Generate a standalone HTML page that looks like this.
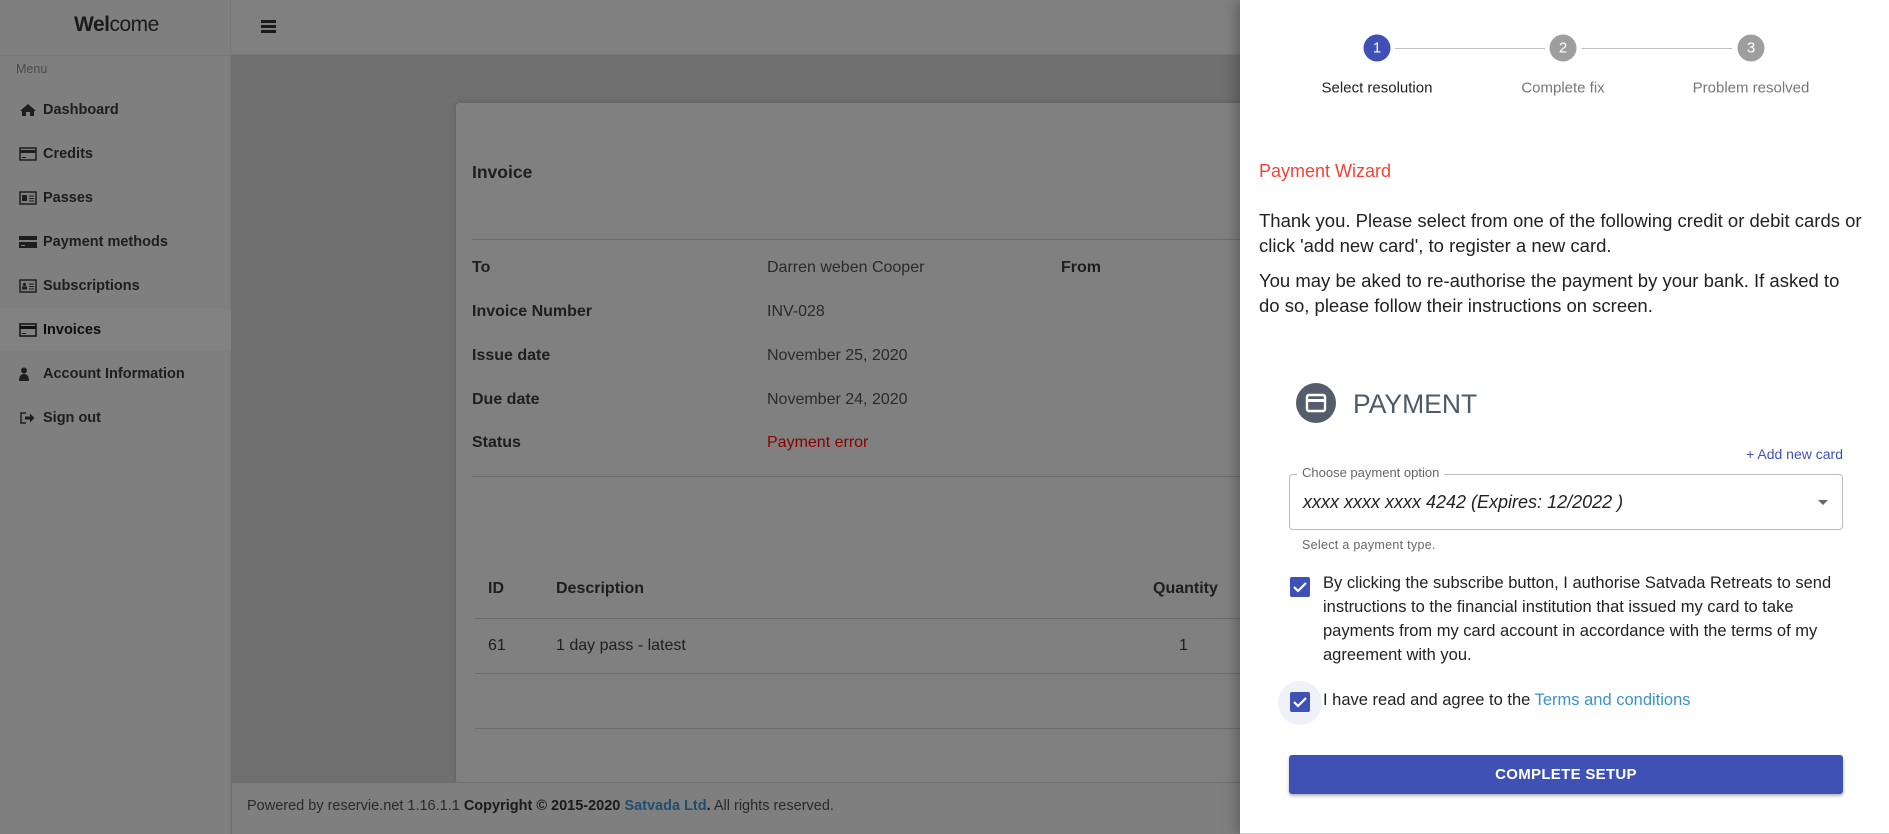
<!DOCTYPE html>
<html><head><meta charset="utf-8"><style>
*{margin:0;padding:0;box-sizing:border-box}
body{width:1889px;height:834px;overflow:hidden;position:relative;font-family:"Liberation Sans",Arial,sans-serif;background:#6f6f6f}
.a{position:absolute;white-space:nowrap}
#side{left:0;top:0;width:231px;height:834px;background:#7f7f7f;border-right:1px solid #777}
#top{left:231px;top:0;width:1009px;height:55px;background:#808080;border-bottom:1px solid #777}
.mi{left:43px;font-size:14.5px;font-weight:bold;color:#1e1e1e;transform:translateY(-50%)}
.ic{left:19px;transform:translateY(-50%)}
#card{left:456px;top:103px;width:800px;height:680px;background:#808080;border-radius:3px;box-shadow:0 0 4px rgba(0,0,0,.2)}
.lb{font-size:16px;font-weight:bold;color:#1e1e1e;transform:translateY(-50%)}
.vl{font-size:16px;color:#2a2a2a;transform:translateY(-50%)}
.hr{height:1px;background:#6c6c6c}
#foot{left:232px;top:782px;width:1008px;height:52px;background:#7f7f7f;border-top:1px solid #6c6c6c}
#drawer{left:1240px;top:0;width:649px;height:834px;background:#fff;box-shadow:-4px 0 12px rgba(0,0,0,.25);border-bottom:1px solid #ccc}
.st{width:27px;height:27px;border-radius:50%;color:#fff;font-size:15px;text-align:center;line-height:27px;transform:translate(-50%,-50%)}
.sl{font-size:15px;transform:translate(-50%,-50%)}
.p{font-size:18.5px;color:#222;line-height:25px}
.cb{width:20px;height:20px;background:#3f51b5;border-radius:2px}
.ct{font-size:16.5px;color:#222;line-height:24px}
</style></head><body>
<div class="a" id="side"></div>
<div class="a" id="top"></div>
<div class="a" style="left:0;top:55px;width:231px;height:1px;background:#777"></div>
<div class="a" style="left:74px;top:13px;font-size:21px;color:#1a1a1a;letter-spacing:-0.5px"><b>Wel</b>come</div>
<div class="a" style="left:16px;top:62px;font-size:12.5px;color:#4a4a4a">Menu</div>
<div class="a" style="left:0;top:309px;width:231px;height:42px;background:#828282"></div>
<svg class="a ic" style="top:110px" width="18" height="14" viewBox="0 0 18 14"><path d="M9 1L1 8h2v5h4V9h4v4h4V8h2z" fill="#1e1e1e"/></svg>
<svg class="a ic" style="top:154px" width="18" height="14" viewBox="0 0 18 14"><rect x="1" y="1" width="16" height="12" fill="none" stroke="#1e1e1e" stroke-width="1.5"/><rect x="1" y="3" width="16" height="3" fill="#1e1e1e"/><path d="M3 10.5h4" stroke="#1e1e1e"/></svg>
<svg class="a ic" style="top:198px" width="18" height="14" viewBox="0 0 18 14"><rect x="1" y="1" width="16" height="12" fill="none" stroke="#1e1e1e" stroke-width="1.5"/><rect x="3" y="4" width="5" height="6" fill="#1e1e1e"/><path d="M10 5h5M10 7.5h5M10 10h5" stroke="#1e1e1e"/></svg>
<svg class="a ic" style="top:242px" width="18" height="14" viewBox="0 0 18 14"><rect x="0" y="1" width="18" height="12" fill="#1e1e1e"/><rect x="0" y="5" width="18" height="2" fill="#7f7f7f"/><path d="M2 10.5h4" stroke="#7f7f7f"/></svg>
<svg class="a ic" style="top:286px" width="18" height="14" viewBox="0 0 18 14"><rect x="1" y="1" width="16" height="12" fill="none" stroke="#1e1e1e" stroke-width="1.5"/><circle cx="5.5" cy="5.5" r="1.6" fill="#1e1e1e"/><rect x="3" y="7.5" width="5" height="3" fill="#1e1e1e"/><path d="M10 5h5M10 7.5h5M10 10h5" stroke="#1e1e1e"/></svg>
<svg class="a ic" style="top:330px" width="18" height="14" viewBox="0 0 18 14"><rect x="1" y="1" width="16" height="12" fill="none" stroke="#111" stroke-width="1.5"/><rect x="1" y="3" width="16" height="3" fill="#111"/><path d="M3 10.5h4" stroke="#111"/></svg>
<svg class="a ic" style="top:374px" width="18" height="14" viewBox="0 0 18 14"><circle cx="5" cy="3.5" r="3" fill="#1e1e1e"/><path d="M0 14c0-5 2-7 5-7s5 2 5 7z" fill="#1e1e1e"/></svg>
<svg class="a ic" style="top:418px" width="18" height="14" viewBox="0 0 18 14"><path d="M7 2H2v10h5" fill="none" stroke="#1e1e1e" stroke-width="1.5"/><path d="M6 5.5h5V2.5l4.5 4.5-4.5 4.5V8.5H6z" fill="#1e1e1e"/></svg>
<div class="a mi" style="top:110px">Dashboard</div>
<div class="a mi" style="top:154px">Credits</div>
<div class="a mi" style="top:198px">Passes</div>
<div class="a mi" style="top:242px">Payment methods</div>
<div class="a mi" style="top:286px">Subscriptions</div>
<div class="a mi" style="top:330px;color:#0e0e0e">Invoices</div>
<div class="a mi" style="top:374px">Account Information</div>
<div class="a mi" style="top:418px">Sign out</div>
<div class="a" style="left:261px;top:20px;width:15px;height:3px;background:#1a1a1a;box-shadow:0 5px 0 #1a1a1a,0 10px 0 #1a1a1a"></div>

<div class="a" id="card"></div>
<div class="a" style="left:472px;top:162px;font-size:17.5px;font-weight:bold;color:#1e1e1e">Invoice</div>
<div class="a hr" style="left:472px;top:239px;width:780px"></div>
<div class="a lb" style="left:472px;top:268px">To</div>
<div class="a vl" style="left:767px;top:268px">Darren weben Cooper</div>
<div class="a lb" style="left:1061px;top:268px">From</div>
<div class="a lb" style="left:472px;top:312px">Invoice Number</div>
<div class="a vl" style="left:767px;top:312px">INV-028</div>
<div class="a lb" style="left:472px;top:356px">Issue date</div>
<div class="a vl" style="left:767px;top:356px">November 25, 2020</div>
<div class="a lb" style="left:472px;top:400px">Due date</div>
<div class="a vl" style="left:767px;top:400px">November 24, 2020</div>
<div class="a lb" style="left:472px;top:443px">Status</div>
<div class="a vl" style="left:767px;top:443px;color:#8a0000">Payment error</div>
<div class="a hr" style="left:472px;top:476px;width:780px"></div>
<div class="a lb" style="left:488px;top:589px">ID</div>
<div class="a lb" style="left:556px;top:589px">Description</div>
<div class="a lb" style="left:1153px;top:589px">Quantity</div>
<div class="a hr" style="left:475px;top:618px;width:770px"></div>
<div class="a vl" style="left:488px;top:646px;color:#1e1e1e">61</div>
<div class="a vl" style="left:556px;top:646px;color:#1e1e1e">1 day pass - latest</div>
<div class="a vl" style="left:1179px;top:646px;color:#1e1e1e">1</div>
<div class="a hr" style="left:475px;top:673px;width:770px"></div>
<div class="a hr" style="left:475px;top:728px;width:770px"></div>
<div class="a" id="foot"></div>
<div class="a" style="left:247px;top:798px;font-size:14.5px;color:#2a2a2a">Powered by reservie.net 1.16.1.1 <b style="color:#1a1a1a">Copyright © 2015-2020 <span style="color:#1f4f6e">Satvada Ltd</span>.</b> All rights reserved.</div>

<div class="a" id="drawer"></div>
<div class="a" style="left:1395px;top:48px;width:150px;height:1px;background:#bdbdbd"></div>
<div class="a" style="left:1582px;top:48px;width:150px;height:1px;background:#bdbdbd"></div>
<div class="a st" style="left:1377px;top:48px;background:#3f51b5">1</div>
<div class="a st" style="left:1563px;top:48px;background:#9e9e9e">2</div>
<div class="a st" style="left:1751px;top:48px;background:#9e9e9e">3</div>
<div class="a sl" style="left:1377px;top:88px;color:#222;font-weight:500">Select resolution</div>
<div class="a sl" style="left:1563px;top:88px;color:#777">Complete fix</div>
<div class="a sl" style="left:1751px;top:88px;color:#777">Problem resolved</div>
<div class="a" style="left:1259px;top:161px;font-size:18px;color:#f44336">Payment Wizard</div>
<div class="a p" style="left:1259px;top:208px">Thank you. Please select from one of the following credit or debit cards or<br>click 'add new card', to register a new card.</div>
<div class="a p" style="left:1259px;top:268px">You may be aked to re-authorise the payment by your bank. If asked to<br>do so, please follow their instructions on screen.</div>
<div class="a" style="left:1296px;top:383px;width:40px;height:40px;border-radius:50%;background:#535d6b"></div>
<svg class="a" style="left:1305px;top:393px" width="22" height="20" viewBox="0 0 22 20"><rect x="2" y="2" width="18" height="16" rx="2" fill="none" stroke="#fff" stroke-width="2.4"/><rect x="2" y="6" width="18" height="3" fill="#fff"/></svg>
<div class="a" style="left:1353px;top:389px;font-size:26.5px;color:#4f5a68">PAYMENT</div>
<div class="a" style="left:1843px;top:446px;font-size:14px;color:#3f51b5;transform:translateX(-100%)">+ Add new card</div>
<div class="a" style="left:1289px;top:474px;width:554px;height:56px;border:1px solid #bdbdbd;border-radius:4px"></div>
<div class="a" style="left:1297px;top:465px;padding:0 5px;background:#fff;font-size:13px;color:#666">Choose payment option</div>
<div class="a" style="left:1303px;top:492px;font-size:18px;font-style:italic;color:#222">xxxx xxxx xxxx 4242 (Expires: 12/2022 )</div>
<div class="a" style="left:1818px;top:500px;width:0;height:0;border-left:5px solid transparent;border-right:5px solid transparent;border-top:5px solid #666"></div>
<div class="a" style="left:1302px;top:538px;font-size:12.5px;color:#666;letter-spacing:.3px">Select a payment type.</div>
<div class="a cb" style="left:1290px;top:577px"></div>
<svg class="a" style="left:1290px;top:577px" width="20" height="20" viewBox="0 0 20 20"><path d="M4 10l4 4 8-8" fill="none" stroke="#fff" stroke-width="2.2"/></svg>
<div class="a ct" style="left:1323px;top:571px">By clicking the subscribe button, I authorise Satvada Retreats to send<br>instructions to the financial institution that issued my card to take<br>payments from my card account in accordance with the terms of my<br>agreement with you.</div>
<div class="a" style="left:1278px;top:681px;width:44px;height:44px;border-radius:50%;background:#f0f1f8"></div>
<div class="a cb" style="left:1290px;top:692px"></div>
<svg class="a" style="left:1290px;top:692px" width="20" height="20" viewBox="0 0 20 20"><path d="M4 10l4 4 8-8" fill="none" stroke="#fff" stroke-width="2.2"/></svg>
<div class="a ct" style="left:1323px;top:688px">I have read and agree to the <span style="color:#3a93c9">Terms and conditions</span></div>
<div class="a" style="left:1289px;top:755px;width:554px;height:39px;background:#3f51b5;border-radius:3px;box-shadow:0 2px 3px rgba(0,0,0,.3);color:#fff;font-size:15px;font-weight:bold;text-align:center;line-height:39px;letter-spacing:.3px">COMPLETE SETUP</div>
</body></html>
